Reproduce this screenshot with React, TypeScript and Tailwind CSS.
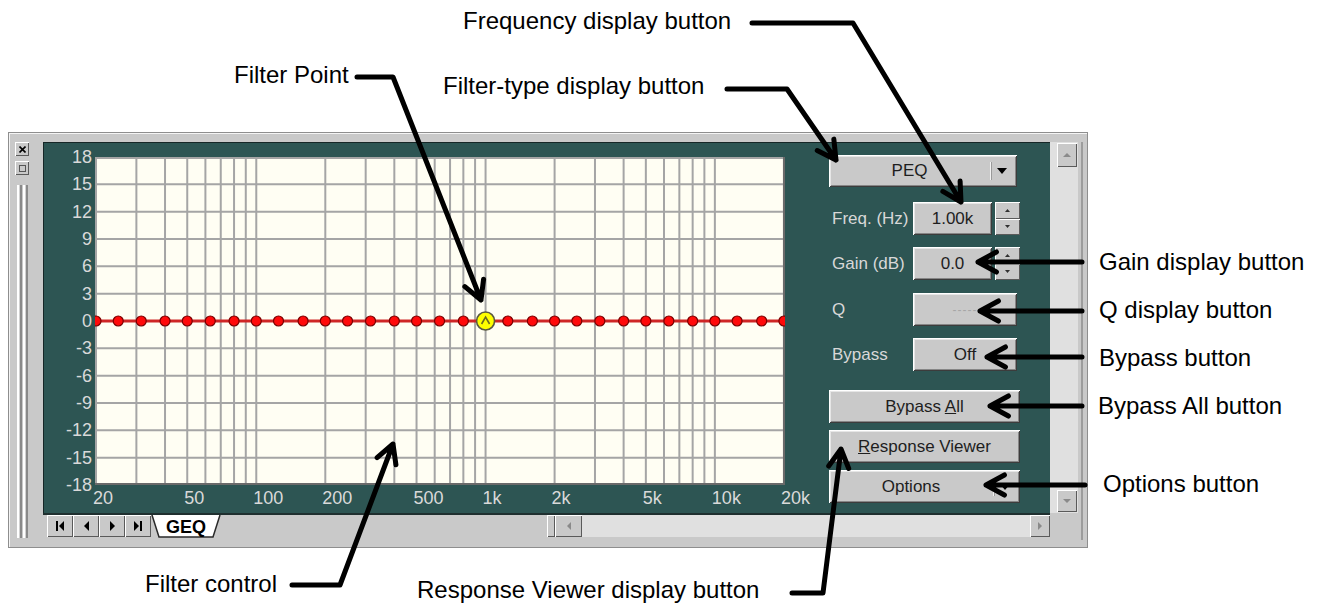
import React from 'react';

type Pt = [number, number];

const PW = 690;
const PH = 328;
const fx = (f: number) => 1 + 229.3 * Math.log10(f / 20);

const bands = [
  20, 25, 31.5, 40, 50, 63, 80, 100, 125, 160, 200, 250, 315, 400, 500, 630, 800, 1000, 1250, 1600,
  2000, 2500, 3150, 4000, 5000, 6300, 8000, 10000, 12500, 16000, 20000,
];

const gridFreqs: number[] = [];
for (const dec of [10, 100, 1000, 10000]) {
  for (let m = 1; m <= 9; m++) {
    const f = m * dec;
    if (f >= 20 && f <= 20000) gridFreqs.push(f);
  }
}

const yLabels = ['18', '15', '12', '9', '6', '3', '0', '-3', '-6', '-9', '-12', '-15', '-18'];
const xLabels: [number, string][] = [
  [20, '20'], [50, '50'], [100, '100'], [200, '200'], [500, '500'],
  [1000, '1k'], [2000, '2k'], [5000, '5k'], [10000, '10k'], [20000, '20k'],
];

const bevel =
  'bg-[#c9c9c9] shadow-[inset_1px_1px_0_#ffffff,inset_-1px_-1px_0_#3c3c3c,inset_2px_2px_0_#e6e6e6,inset_-2px_-2px_0_#868686]';
const smallBevel = 'bg-[#c9c9c9] shadow-[inset_1px_1px_0_#ffffff,inset_-1px_-1px_0_#5a5a5a]';

const Tri = ({ dir, color = '#000', w = 8, h = 5 }: { dir: 'up' | 'down' | 'left' | 'right'; color?: string; w?: number; h?: number }) => {
  const pts =
    dir === 'up' ? `0,${h} ${w},${h} ${w / 2},0` :
    dir === 'down' ? `0,0 ${w},0 ${w / 2},${h}` :
    dir === 'left' ? `${w},0 ${w},${h} 0,${h / 2}` :
    `0,0 0,${h} ${w},${h / 2}`;
  return (
    <svg width={w} height={h} className="block">
      <polygon points={pts} fill={color} />
    </svg>
  );
};

const Plot = () => {
  const hy = (i: number) => Math.max(1, Math.min(PH - 1, (i * PH) / 12));
  const zero = PH / 2;
  return (
    <svg width={PW} height={PH} className="block">
      <rect width={PW} height={PH} fill="#fffef3" />
      {gridFreqs.map((f) => (
        <line key={f} x1={fx(f)} x2={fx(f)} y1={0} y2={PH} stroke="#a5a5a5" strokeWidth={2} />
      ))}
      {Array.from({ length: 13 }).map((_, i) => (
        <line key={i} x1={0} x2={PW} y1={hy(i)} y2={hy(i)} stroke="#a5a5a5" strokeWidth={2} />
      ))}
      <line x1={PW - 1} x2={PW - 1} y1={0} y2={PH} stroke="#6a6a6a" strokeWidth={2} />
      <line x1={0} x2={PW} y1={PH - 1} y2={PH - 1} stroke="#6a6a6a" strokeWidth={2} />
      <line x1={0} x2={PW - 2} y1={zero} y2={zero} stroke="#cf2626" strokeWidth={3} />
      {bands.map((f) =>
        f === 1000 ? null : (
          <circle key={f} cx={fx(f)} cy={zero} r={5} fill="#ff0a0a" stroke="#7a0000" strokeWidth={1.2} />
        ),
      )}
      <circle cx={fx(1000)} cy={zero} r={9} fill="#ffff00" stroke="#5a5a40" strokeWidth={1.6} />
      <path
        d={`M${fx(1000) - 4},${zero + 3} L${fx(1000)},${zero - 4} L${fx(1000) + 4},${zero + 3}`}
        fill="none"
        stroke="#6a6a20"
        strokeWidth={1.6}
      />
    </svg>
  );
};

const Controls = () => (
  <div className="ml-[44px] w-[191px] flex flex-col text-[17px] text-[#1e1e1e]">
    <div className={`mt-[13px] h-[32px] w-[188px] flex items-center ${bevel}`}>
      <span className="w-[161px] text-center">PEQ</span>
      <span className="w-[2px] h-[18px] bg-[#f2f2f2] border-r border-[#9a9a9a]" />
      <span className="w-[25px] flex pl-[5px]">
        <Tri dir="down" w={10} h={6} />
      </span>
    </div>

    <div className="mt-[15px] h-[33px] flex items-center">
      <span className="w-[84px] pl-[3px] text-[#d8d8d8]">Freq. (Hz)</span>
      <span className={`w-[79px] h-full flex items-center justify-center ${bevel}`}>1.00k</span>
      <Spinner />
    </div>

    <div className="mt-[12px] h-[33px] flex items-center">
      <span className="w-[84px] pl-[3px] text-[#d8d8d8]">Gain (dB)</span>
      <span className={`w-[79px] h-full flex items-center justify-center ${bevel}`}>0.0</span>
      <Spinner />
    </div>

    <div className="mt-[13px] h-[33px] flex items-center">
      <span className="w-[84px] pl-[3px] text-[#d8d8d8]">Q</span>
      <span className={`w-[104px] h-full flex items-center justify-center text-[12px] tracking-[1px] text-[#a6a6a6] ${bevel}`}>
        -----
      </span>
    </div>

    <div className="mt-[12px] h-[33px] flex items-center">
      <span className="w-[84px] pl-[3px] text-[#d8d8d8]">Bypass</span>
      <span className={`w-[104px] h-full flex items-center justify-center ${bevel}`}>Off</span>
    </div>

    <div className={`mt-[19px] h-[33px] flex items-center justify-center ${bevel}`}>
      <span>
        Bypass <span className="underline">A</span>ll
      </span>
    </div>

    <div className={`mt-[7px] h-[33px] flex items-center justify-center ${bevel}`}>
      <span>
        <span className="underline">R</span>esponse Viewer
      </span>
    </div>

    <div className={`mt-[7px] h-[33px] flex items-center ${bevel}`}>
      <span className="w-[164px] text-center">Options</span>
      <span className="w-[2px] h-[18px] bg-[#f2f2f2] border-r border-[#9a9a9a]" />
      <span className="w-[25px] flex pl-[5px]">
        <Tri dir="down" w={10} h={6} />
      </span>
    </div>
  </div>
);

const Spinner = () => (
  <div className="ml-[3px] w-[25px] h-full flex flex-col">
    <div className={`flex-1 flex items-center justify-center ${smallBevel}`}>
      <Tri dir="up" w={5} h={3} color="#303030" />
    </div>
    <div className={`flex-1 flex items-center justify-center ${smallBevel}`}>
      <Tri dir="down" w={5} h={3} color="#303030" />
    </div>
  </div>
);

const Sheet = () => (
  <div className="w-[1007px] h-[371px] flex bg-[#2d5553] shadow-[inset_1px_1px_0_#162626]">
    <div className="w-[52px] pr-[3px] mt-[5px] h-[348px] flex flex-col justify-between items-end text-[18px] leading-[20px] text-[#d9d9d9]">
      {yLabels.map((v) => (
        <div key={v} className="h-[20px]">
          {v}
        </div>
      ))}
    </div>
    <div className="w-[690px] mt-[15px]">
      <Plot />
      <div className="relative h-[26px] text-[18px] leading-[20px] text-[#d9d9d9]">
        {xLabels.map(([f, t]) => (
          <span key={t} className="absolute top-[3px]" style={{ left: fx(f) - 3 }}>
            {t}
          </span>
        ))}
      </div>
    </div>
    <Controls />
  </div>
);

const NavBtn = ({ children }: { children: React.ReactNode }) => (
  <div className={`w-[26px] h-[22px] flex items-center justify-center gap-[1px] ${smallBevel}`}>{children}</div>
);

const TabRow = () => (
  <div className="flex h-[27px]">
    <div className="w-[1007px] flex items-start pl-[4px] border-t-2 border-[#1f2f2f]">
      <NavBtn>
        <span className="w-[2px] h-[10px] bg-black" />
        <Tri dir="left" w={5} h={10} />
      </NavBtn>
      <NavBtn>
        <Tri dir="left" w={5} h={10} />
      </NavBtn>
      <NavBtn>
        <Tri dir="right" w={5} h={10} />
      </NavBtn>
      <NavBtn>
        <Tri dir="right" w={5} h={10} />
        <span className="w-[2px] h-[10px] bg-black" />
      </NavBtn>
      <div className="relative w-[70px] h-[23px] flex items-center justify-center">
        <svg width={70} height={23} className="absolute inset-0">
          <polygon points="1,0 69,0 62,22 8,22" fill="#ffffff" />
          <polyline points="1,0 8,22 62,22 69,0" fill="none" stroke="#2a2a2a" strokeWidth={1.5} />
        </svg>
        <span className="relative text-[18px] font-bold leading-none text-black">GEQ</span>
      </div>
      <div className="w-[326px]" />
      <div className={`w-[8px] h-[22px] ${smallBevel}`} />
      <div className={`w-[27px] h-[22px] flex items-center justify-center ${smallBevel}`}>
        <Tri dir="left" w={4} h={8} color="#8a8a8a" />
      </div>
      <div className="w-[448px] h-[22px] bg-[#e0e0e0]" />
      <div className={`w-[20px] h-[22px] flex items-center justify-center ${smallBevel}`}>
        <Tri dir="right" w={4} h={8} color="#8a8a8a" />
      </div>
    </div>
    <div className="w-[28px]" />
    <div className="w-[9px] pl-[3px]">
      <div className="w-[2px] h-full bg-[#9c9c9c]" />
    </div>
  </div>
);

const VScroll = () => (
  <div className="w-[28px] h-[371px] flex flex-col pl-[7px] pr-[1px] py-[1px] bg-[#e0e0e0]">
    <div className={`h-[24px] flex items-center justify-center ${smallBevel}`}>
      <Tri dir="up" w={8} h={4} color="#8a8a8a" />
    </div>
    <div className="flex-1" />
    <div className={`h-[22px] flex items-center justify-center ${smallBevel}`}>
      <Tri dir="down" w={8} h={4} color="#8a8a8a" />
    </div>
  </div>
);

const Window = () => (
  <div className="flex w-[1080px] h-[416px] border border-[#8e8e8e] bg-[#c9c9c9] shadow-[inset_1px_1px_0_#f4f4f4]">
    <div className="w-[34px] flex flex-col pl-[6px] pt-[9px] pb-[9px]">
      <div className={`w-[14px] h-[14px] flex items-center justify-center ${smallBevel}`}>
        <svg width={7} height={7}>
          <path d="M0.5,0.5 L6.5,6.5 M6.5,0.5 L0.5,6.5" stroke="#000" strokeWidth={1.6} />
        </svg>
      </div>
      <div className={`mt-[5px] w-[14px] h-[14px] flex items-center justify-center ${smallBevel}`}>
        <svg width={7} height={7}>
          <rect x={0.5} y={0.5} width={6} height={6} fill="none" stroke="#555" strokeWidth={1} />
        </svg>
      </div>
      <div className="mt-[10px] ml-[2px] flex-1 flex gap-[1px]">
        <div className="w-[5px] bg-[#d2d2d2] border-l-2 border-white border-r-2 border-r-[#8a8a8a]" />
        <div className="w-[5px] bg-[#d2d2d2] border-l-2 border-white border-r-2 border-r-[#8a8a8a]" />
      </div>
    </div>
    <div className="flex-1 flex flex-col">
      <div className="h-[9px]" />
      <div className="flex h-[371px]">
        <Sheet />
        <VScroll />
        <div className="w-[9px] pl-[3px]">
          <div className="w-[2px] h-full bg-[#9c9c9c]" />
        </div>
      </div>
      <TabRow />
      <div className="flex-1" />
    </div>
  </div>
);

function arrowPath(pts: Pt[]) {
  const d = pts.map((p, i) => `${i ? 'L' : 'M'}${p[0]},${p[1]}`).join(' ');
  const [tx, ty] = pts[pts.length - 1];
  const [px, py] = pts[pts.length - 2];
  const a = Math.atan2(ty - py, tx - px);
  const L = 21;
  const s = 0.5;
  const h1 = [tx - L * Math.cos(a - s), ty - L * Math.sin(a - s)];
  const h2 = [tx - L * Math.cos(a + s), ty - L * Math.sin(a + s)];
  return `${d} M${h1[0]},${h1[1]} L${tx},${ty} L${h2[0]},${h2[1]}`;
}

const arrows: Pt[][] = [
  [[752, 23], [853, 23], [961, 202]],
  [[727, 89], [787, 89], [836, 160]],
  [[357, 77], [393, 77], [481, 300]],
  [[1082, 262], [978, 262]],
  [[1082, 311], [980, 311]],
  [[1082, 357], [987, 357]],
  [[1082, 406], [990, 406]],
  [[1085, 485], [986, 485]],
  [[792, 593], [823, 593], [841, 449]],
  [[292, 585], [340, 585], [393, 444]],
];

const Callouts = () => (
  <>
    <svg width={1324} height={604} className="absolute inset-0 pointer-events-none">
      {arrows.map((a, i) => (
        <path key={i} d={arrowPath(a)} fill="none" stroke="#000" strokeWidth={5} strokeLinecap="round" strokeLinejoin="round" />
      ))}
    </svg>
    <div className="absolute inset-0 pointer-events-none text-[24px] leading-[24px] text-black whitespace-nowrap">
      <span className="absolute left-[463px] top-[9px]">Frequency display button</span>
      <span className="absolute left-[443px] top-[74px]">Filter-type display button</span>
      <span className="absolute left-[234px] top-[63px]">Filter Point</span>
      <span className="absolute left-[1099px] top-[250px]">Gain display button</span>
      <span className="absolute left-[1099px] top-[298px]">Q display button</span>
      <span className="absolute left-[1099px] top-[346px]">Bypass button</span>
      <span className="absolute left-[1098px] top-[394px]">Bypass All button</span>
      <span className="absolute left-[1103px] top-[472px]">Options button</span>
      <span className="absolute left-[417px] top-[578px]">Response Viewer display button</span>
      <span className="absolute left-[145px] top-[572px]">Filter control</span>
    </div>
  </>
);

export default function App() {
  return (
    <div className="relative w-[1324px] h-[604px] overflow-hidden bg-white pt-[132px] pl-[8px] font-['Liberation_Sans',Arial,sans-serif]">
      <Window />
      <Callouts />
    </div>
  );
}
